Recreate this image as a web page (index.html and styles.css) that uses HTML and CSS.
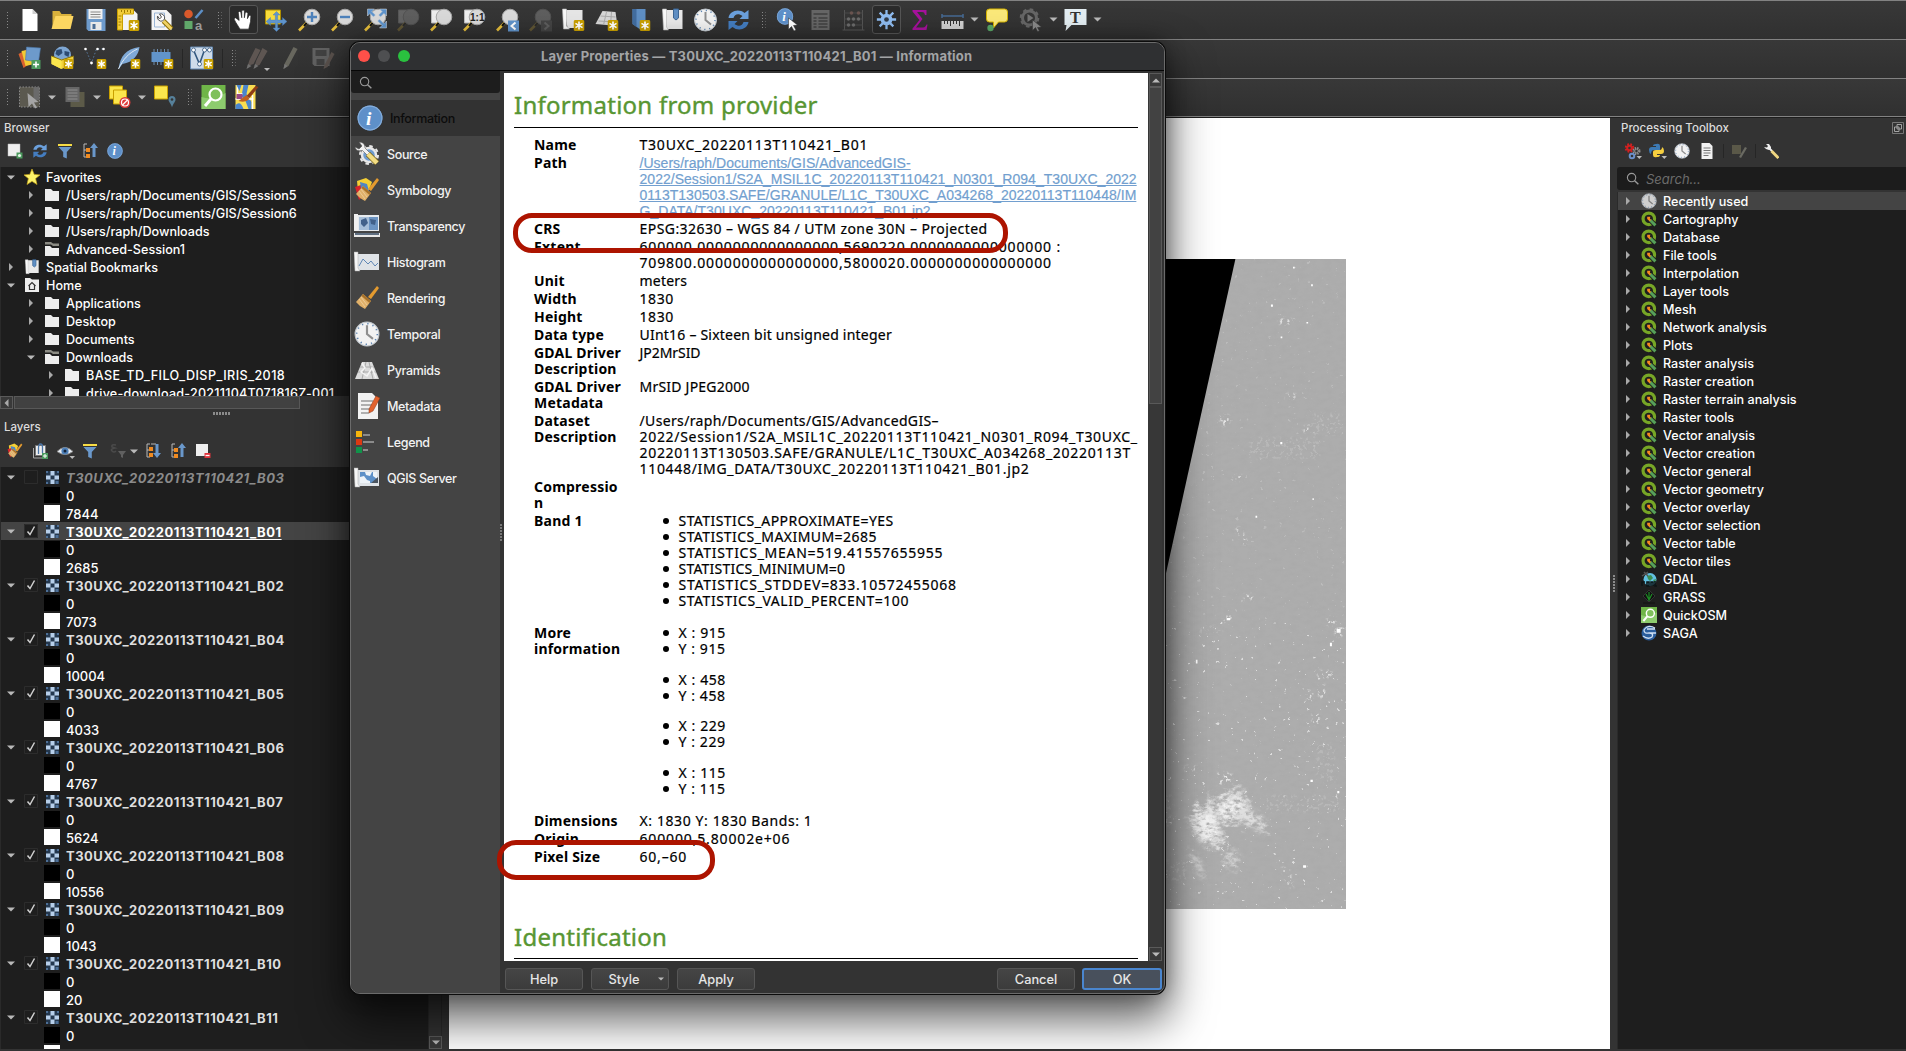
FILE: index.html
```html
<!DOCTYPE html>
<html lang="en">
<head>
<meta charset="utf-8">
<title>QGIS</title>
<link rel="stylesheet" href="styles.css">
</head>
<body>
<svg class="defs" aria-hidden="true">
  <symbol id="star" viewBox="0 0 10 10"><rect width="10" height="10" rx="1.5" fill="#c9a000"/><path d="M5 1.3v7.4M1.8 3.1l6.4 3.8M8.2 3.1L1.8 6.9" stroke="#fff" stroke-width="1.5"/></symbol>
  <symbol id="new" viewBox="0 0 24 24"><path d="M5 1h10l5 5v17H5z" fill="#fff"/><path d="M15 1l5 5h-5z" fill="#cfcfcf"/></symbol>
  <symbol id="open" viewBox="0 0 24 24"><path d="M2 3h7l2 3h10v4H5L2 20z" fill="#d9b13c"/><path d="M5 8h18l-3 13H1z" fill="#fcd661"/></symbol>
  <symbol id="save" viewBox="0 0 24 24"><path d="M3 1h19v22H5l-2-2z" fill="#6d9acb"/><path d="M5 1h14v10H5z" fill="#f1f1f1"/><path d="M7 4h10M7 6.500h10M7 9h10" stroke="#888"/><path d="M7 14h11v8H7z" fill="#e8e8e8"/><path d="M9 16h3v5H9z" fill="#4a6d95"/></symbol>
  <symbol id="layoutnew" viewBox="0 0 24 24"><path d="M3 2h14l4 4v16H3z" fill="#f4f4f4"/><path d="M1 1h16v5H6v16H1z" fill="#f2cd3c" stroke="#c9a000"/><path d="M5 2v2M8 2v3M11 2v2M14 2v3M2 8h3M2 11h2M2 14h3M2 17h2" stroke="#a07c00"/><use href="#star" x="12" y="12" width="11" height="11"/></symbol>
  <symbol id="layoutmgr" viewBox="0 0 24 24"><path d="M2 2h15l5 5v15H2z" fill="#f4f4f4"/><path d="M5 5h10v14H5z" fill="none" stroke="#9bb6d6"/><path d="M8 8a4 4 0 0 0 5 5l2-2a4 4 0 0 0-5-5l2 3-2 2z" fill="#fff" stroke="#555"/><path d="M14 13l8 8" stroke="#8a6b00" stroke-width="5"/><path d="M14 13l8 8" stroke="#f0d264" stroke-width="3"/></symbol>
  <symbol id="style" viewBox="0 0 24 24"><circle cx="6" cy="6" r="4.300" fill="#d9592b"/><path d="M13 10l7-8" stroke="#5d8fc6" stroke-width="2.500"/><path d="M2 13h8v8H2z" fill="#61a86a"/><text x="12.500" y="22" class="sym-a">a</text></symbol>
  <symbol id="hand" viewBox="0 0 24 24"><path d="M8 23l-5-8-2-4 2-1 4 3-1-9 1.500-1.500L9 4l1 6V2l1.500-1L13 2v8l1-6 1.500-.5L17 5l-.500 6 2-4 2 .5-.500 7-2 8.500z" fill="#fff" stroke="#222" stroke-width=".8"/></symbol>
  <symbol id="pan" viewBox="0 0 24 24"><path d="M1 2h15v14H1z" fill="#f8dc3c" stroke="#ad8d00"/><path d="M12 3.500l3.500 3.500h-2.300v5H18v-2.500l4.500 4-4.500 4V15h-4.800v5h2.300L12 23.500 8.500 20h2.300v-5H6v2.500l-4.500-4 4.500-4V12h4.800V7H8.500z" fill="#5f94cc" stroke="#4a78ab" stroke-width=".4"/></symbol>
  <symbol id="mag" viewBox="0 0 24 24"><path d="M1.500 22.500l8-8" stroke="#e5bd3b" stroke-width="2.600"/><path d="M6.500 18l4-4.500" stroke="#111" stroke-width="2"/><circle cx="14.500" cy="9" r="7.800" fill="#d9d9d9" stroke="#a6a6a6"/></symbol>
  <symbol id="zin" viewBox="0 0 24 24"><use href="#mag"/><path d="M14.500 4v10M9.500 9h10" stroke="#4e82bb" stroke-width="2.400"/></symbol>
  <symbol id="zout" viewBox="0 0 24 24"><use href="#mag"/><path d="M9.500 9h10" stroke="#4e82bb" stroke-width="2.400"/></symbol>
  <symbol id="zfull" viewBox="0 0 24 24"><use href="#mag"/><path d="M4 1h7L8.500 3.500 12 7l-2 2-3.500-3.500L4 8zM23 1v7l-2.500-2.500L17 9l-2-2 3.500-3.500L16 1zM23 20h-7l2.500-2.500L14 13l2-2 4.500 4.500L23 13z" fill="#5f94cc" stroke="#ddd" stroke-width=".5"/></symbol>
  <symbol id="zlayer" viewBox="0 0 24 24"><path d="M2 2h13v13H2z" fill="#eee" stroke="#bbb"/><use href="#mag"/></symbol>
  <symbol id="znative" viewBox="0 0 24 24"><use href="#zlayer"/><text x="7.500" y="13" class="sym-11">1:1</text></symbol>
  <symbol id="zprev" viewBox="0 0 24 24"><use href="#mag"/><path d="M12.500 12.500h11v11h-11z" fill="#6093ca"/><path d="M20 14.500L16 18l4 3.500" fill="none" stroke="#fff" stroke-width="2"/></symbol>
  <symbol id="znext" viewBox="0 0 24 24"><use href="#mag"/><path d="M12.500 12.500h11v11h-11z" fill="#777"/><path d="M16 14.500l4 3.500-4 3.500" fill="none" stroke="#ddd" stroke-width="2"/></symbol>
  <symbol id="mapnew" viewBox="0 0 24 24"><path d="M3 2h18v18H6z" fill="#e6e6e6"/><path d="M1 1h4v17l3 3H2z" fill="#fafafa" stroke="#bbb" stroke-width=".6"/><use href="#star" x="12" y="12" width="11" height="11"/></symbol>
  <symbol id="map3d" viewBox="0 0 24 24"><path d="M8 3l13 1 2 14-22-2z" fill="#d6d6d6"/><path d="M6 8l15 1M4 13l18 1M12 4l-3 13M17 4l-1 13" stroke="#aaa"/><use href="#star" x="13" y="12" width="11" height="11"/></symbol>
  <symbol id="bmnew" viewBox="0 0 24 24"><path d="M5 1h13v17l-6 3-7-5z" fill="#5f8fc4"/><path d="M5 1h4v18l-4-3z" fill="#426d9f"/><use href="#star" x="12" y="12" width="11" height="11"/></symbol>
  <symbol id="bm" viewBox="0 0 24 24"><path d="M2 2h20v19H5z" fill="#e9e9e9"/><path d="M2 1h4v18l2 3H3z" fill="#fafafa" stroke="#bbb" stroke-width=".6"/><path d="M13 1h5v9l-2.500 2L13 10z" fill="#5f8fc4" stroke="#3d6694"/></symbol>
  <symbol id="clock" viewBox="0 0 24 24"><circle cx="12" cy="12" r="11" fill="#f2f2f2" stroke="#bfc6cd"/><circle cx="12" cy="12" r="9.500" fill="none" stroke="#5b83b0" stroke-width="1.400" stroke-dasharray="1.200 3.770"/><path d="M12 4v8l5.500 4.500" fill="none" stroke="#8f8f8f" stroke-width="2"/></symbol>
  <symbol id="refresh" viewBox="0 0 24 24"><path d="M2 10C3 3 12 0 18 5l4-3v9h-9l3-3C12 5 8 6 7 10z" fill="#6ba0dc"/><path d="M22 14c-1 7-10 10-16 5l-4 3v-9h9l-3 3c4 3 8 2 9-2z" fill="#447dc0"/></symbol>
  <symbol id="info" viewBox="0 0 24 24"><circle cx="12" cy="12" r="11.500" fill="#5e90c9"/><circle cx="12" cy="12" r="11" fill="none" stroke="#86aedb"/><text x="8.200" y="18.500" class="sym-i">i</text></symbol>
  <symbol id="identify" viewBox="0 0 24 24"><use href="#info" width="17" height="17" x="1"/><path d="M13 10l9 7-4 .5 2.500 4.500-2 1-2.500-4.500-3 3z" fill="#fff" stroke="#222" stroke-width=".5"/></symbol>
  <symbol id="table" viewBox="0 0 24 24"><path d="M3 2h18v20H3z" fill="#666"/><path d="M5 6h14M5 10h3M10 10h9M5 13h3M10 13h9M5 16h3M10 16h9M5 19h3M10 19h9" stroke="#404040" stroke-width="1.500"/></symbol>
  <symbol id="abacus" viewBox="0 0 24 24"><path d="M3 2v20M21 2v20M1 22h22" stroke="#555"/><path d="M3 5h18M3 11h18M3 17h18" stroke="#4a4a4a"/><g fill="#6a5450"><circle cx="10" cy="5" r="1.800"/><circle cx="17" cy="5" r="1.800"/></g><g fill="#6b6b6b"><circle cx="7" cy="11" r="1.700"/><circle cx="12" cy="11" r="1.700"/><circle cx="17" cy="11" r="1.700"/><circle cx="7" cy="17" r="1.700"/><circle cx="12" cy="17" r="1.700"/></g></symbol>
  <symbol id="gear" viewBox="0 0 24 24"><path d="M12 1v22M1 12h22M4.200 4.200l15.600 15.600M19.800 4.200L4.200 19.800" stroke="#8fbcf0" stroke-width="2.600"/><circle cx="12" cy="12" r="6.700" fill="#8fbcf0"/><circle cx="12" cy="12" r="2.700" fill="#303a48"/></symbol>
  <symbol id="sigma" viewBox="0 0 24 24"><path d="M5 2h14v5h-1.500c-.5-2-1-3-3-3H9.500l5.500 7-6.500 8.500h7c2 0 3-1.500 3.500-3H20L19 22H5v-1.500L12 12 5 3.500z" fill="#a6129c"/></symbol>
  <symbol id="ruler" viewBox="0 0 24 24"><path d="M1.500 8h21M1.500 6v4M22.500 6v4" stroke="#456a92" stroke-width="1.500"/><path d="M1 13h22v8H1z" fill="#d0d0d0"/><path d="M4 13v3M7 13v3M10 13v5M13 13v3M16 13v3M19 13v5" stroke="#333"/></symbol>
  <symbol id="tip" viewBox="0 0 24 24"><path d="M5 1h15q3 0 3 3v7q0 3-3 3h-6l-5 6v-6H5q-3 0-3-3V4q0-3 3-3z" fill="#fbe97a" stroke="#d6b400"/><circle cx="6" cy="20" r="3.200" fill="#58a667"/></symbol>
  <symbol id="run" viewBox="0 0 24 24"><circle cx="10" cy="10" r="7" fill="none" stroke="#666" stroke-width="3"/><circle cx="10" cy="10" r="8.800" fill="none" stroke="#666" stroke-width="2" stroke-dasharray="3.500 3.400"/><path d="M8 6l6 4-6 4z" fill="#777"/><path d="M13 12l9 7-4 .5 2 3.500-2 .5-2-4-3 3z" fill="#8a8a8a" stroke="#333" stroke-width=".5"/></symbol>
  <symbol id="annot" viewBox="0 0 24 24"><path d="M1 1h22v16H8l-6 6 1-6H1z" fill="#e3edf2"/><text x="6.500" y="14.500" class="sym-t">T</text></symbol>
  <symbol id="down" viewBox="0 0 8 5"><path d="M0 .5h8L4 4.500z" fill="#b9b9b9"/></symbol>
  <symbol id="right" viewBox="0 0 5 8"><path d="M.5 0L4.500 4 .5 8z" fill="#a9a9a9"/></symbol>
  <symbol id="addlayer" viewBox="0 0 24 24"><path d="M1 8l9-5 5 13-9 6z" fill="#d9622f"/><path d="M4 5l11-2 2 15-9 2z" fill="#f3cb33"/><path d="M9 1l14 1-2 14-13-2z" fill="#6d9acb" stroke="#4a75a8" stroke-width=".6"/><path d="M14 14h9v9h-9z" fill="#4d9b5f"/><path d="M18.500 15.500v6M15.500 18.500h6" stroke="#fff" stroke-width="1.600"/></symbol>
  <symbol id="gpkg" viewBox="0 0 24 24"><circle cx="12" cy="9" r="8.500" fill="#7ea6d2"/><path d="M6 4l5-1 1 4-4 3-3-2zM14 5l5 1-1 5-4-2z" fill="#2c4b73"/><path d="M1 10l10 4 12-4v8l-12 5-10-5z" fill="#f3d23b"/><path d="M11 14v9L1 18v-8z" fill="#fbe64d"/><path d="M1 10l10 4 12-4" fill="none" stroke="#8b7200"/><use href="#star" x="13" y="13" width="10" height="10"/></symbol>
  <symbol id="shp" viewBox="0 0 24 24"><path d="M2 3l6 14L13 3h7" fill="none" stroke="#56779c" stroke-dasharray="1.500 2"/><g fill="#fff"><circle cx="2" cy="3" r="1.300"/><circle cx="8" cy="17" r="1.400"/><circle cx="14" cy="3" r="1.300"/><circle cx="20" cy="3" r="1.300"/></g><use href="#star" x="13" y="13" width="10" height="10"/></symbol>
  <symbol id="feather" viewBox="0 0 24 24"><path d="M2 23C4 10 9 3 23 1c-1 8-6 15-17 17z" fill="#7fa9d6"/><path d="M2 23C6 14 12 7 21 3" fill="none" stroke="#dfeaf5"/><use href="#star" x="14" y="13" width="10" height="10"/></symbol>
  <symbol id="mem" viewBox="0 0 24 24"><path d="M4.500 3v16M8 3v16M11.500 3v16M15 3v16M18.500 3v16" stroke="#6f8fb0"/><path d="M2 6h19v10H2z" fill="#6194ca"/><use href="#star" x="14" y="13" width="10" height="10"/></symbol>
  <symbol id="virt" viewBox="0 0 24 24"><path d="M1 1h22v22H1z" fill="#cfdcea" stroke="#6488b0"/><path d="M4 4l6 14L15 4h5" fill="none" stroke="#33587f" stroke-width="1.600"/><g fill="#fff" stroke="#33587f" stroke-width=".8"><circle cx="4" cy="4" r="2"/><circle cx="10" cy="18" r="2"/><circle cx="15" cy="4" r="2"/><circle cx="20" cy="4" r="2"/></g><use href="#star" x="14" y="13" width="10" height="10"/></symbol>
  <symbol id="pencils" viewBox="0 0 24 24"><path d="M2 20l2-6L10 2l5 2-7 14zM9 20l2-6L17 2l5 3-8 14z" fill="#7a6c66"/><path d="M1 23l1.500-5 3.500 2zM8 23l1.500-5 3.500 2z" fill="#999"/></symbol>
  <symbol id="pencil" viewBox="0 0 24 24"><path d="M6 18L15 1l4 2-9 17-5 3z" fill="#8a897a"/><path d="M5 23l1-5 3 2z" fill="#a1a1a1"/></symbol>
  <symbol id="savee" viewBox="0 0 24 24"><path d="M1 2h17v18H3l-2-2z" fill="#808080"/><path d="M4 4h11v6H4zM5 13h8v6H5z" fill="#4b4b4b"/><path d="M13 19l7-13 3 2-7 13-4 2z" fill="#75675f"/></symbol>
  <symbol id="select" viewBox="0 0 24 24"><path d="M2 2h20v20H2z" fill="#5b594f" stroke="#8a8a8a" stroke-dasharray="1.500 1.500"/><path d="M16 2h6v13h-6z" fill="#6a6a6a"/><path d="M10 8l11 9-4.500.5 3 5-2 1-3-5-3.500 3.500z" fill="#a5a5a5"/></symbol>
  <symbol id="forms" viewBox="0 0 24 24"><path d="M10 7h12v15H8V9z" fill="#5c5a48"/><path d="M3 2h14v15H3z" fill="#666"/><path d="M5 5h10M5 8h10M5 11h10M5 14h10" stroke="#8f8f8f"/></symbol>
  <symbol id="desel" viewBox="0 0 24 24"><path d="M2 1h13v13H2z" fill="#fbe64d" stroke="#c9a000"/><path d="M6 5h13v14H6z" fill="#fbe64d" stroke="#c9a000"/><circle cx="17.500" cy="17.500" r="5.500" fill="#dc3b3b"/><circle cx="17.500" cy="17.500" r="3.500" fill="none" stroke="#fff" stroke-width="1.200"/><path d="M15 20l5-5" stroke="#fff" stroke-width="1.200"/></symbol>
  <symbol id="loc" viewBox="0 0 24 24"><path d="M2 1h13v13H2z" fill="#fbe64d" stroke="#c9a000"/><path d="M19.500 11a3.500 3.500 0 0 1 3.500 3.500c0 2.500-2.500 4-3.500 8-1-4-3.500-5.500-3.500-8a3.500 3.500 0 0 1 3.500-3.500z" fill="#56809a"/><circle cx="19.500" cy="14.500" r="1.300" fill="#333"/></symbol>
  <symbol id="qosm" viewBox="0 0 24 24"><path d="M0 0h24v24H0z" fill="#6fb548"/><path d="M0 12Q12 16 24 8v16H0z" fill="#8dcc6e"/><circle cx="14" cy="9.500" r="6" fill="#7fc05c" stroke="#fff" stroke-width="2.200"/><path d="M9.500 14L3.500 21" stroke="#fff" stroke-width="3"/></symbol>
  <symbol id="osmp" viewBox="0 0 24 24"><path d="M1 0h20v24H1z" fill="#f9dd50"/><path d="M9 0h5l-2 9 5 8v7h-3l-3-8-4-5z" fill="#4a85cc"/><path d="M3 0v9h5M1 14h18M18 10v14" fill="none" stroke="#fff" stroke-width="1.500"/><path d="M2 9h6v5H2z" fill="#9a4a86"/><path d="M1 20q5-5 8 4H1zM2 0h5l-2 6z" fill="#4a85cc"/><path d="M12 11l9-10 3 1-9 11z" fill="#8f3d16"/><path d="M4 16l8-6 3 4q-4 4-11 2z" fill="#c0601f"/></symbol>
  <symbol id="addsel" viewBox="0 0 16 16"><path d="M1 1h12v12H1z" fill="#efefef" stroke="#bbb" stroke-width=".5"/><path d="M9.500 9.500h6v6h-6z" fill="#4d9b5f"/><circle cx="12.500" cy="12.500" r="1.600" fill="#e6f5e8"/></symbol>
  <symbol id="filter" viewBox="0 0 16 16"><path d="M1 1h14v2H1z" fill="#f7dc45"/><path d="M1.500 4h13L9.800 9v6.500L6.200 14V9z" fill="#6a98cb"/></symbol>
  <symbol id="collapse" viewBox="0 0 16 16"><path d="M2 1h3M2 1v13h3M2 7h3" fill="none" stroke="#b9b9b9"/><path d="M4 5h4v4H4zM4 11h4v4H4z" fill="#f08b22"/><path d="M12 0l4 5h-2.500v9h-3V5H8z" fill="#6a98cb"/></symbol>
  <symbol id="expand" viewBox="0 0 16 16"><path d="M2 1h3M2 1v13h3M2 7h3M6 1h5" fill="none" stroke="#b9b9b9"/><path d="M4 4h4v4H4zM4 10h4v4H4z" fill="#f08b22"/><path d="M12 15l4-5h-2.500V1h-3v9H8z" fill="#6a98cb"/></symbol>
  <symbol id="fav" viewBox="0 0 16 16"><path d="M8 0l2.200 5.400L16 5.900l-4.400 3.700L13 15.500 8 12.300 3 15.500l1.400-5.900L0 5.900l5.800-.5z" fill="#fdf36a" stroke="#c9a81c" stroke-width=".7"/></symbol>
  <symbol id="folder" viewBox="0 0 16 16"><path d="M1 2h6l2 2h6v10H1z" fill="#ededed"/></symbol>
  <symbol id="folderl" viewBox="0 0 16 16"><path d="M1 1h6l2 1.500h6V5H9L7 3.500H1z" fill="#8c8c84"/><path d="M1 5h5l2 2h7v8H1z" fill="#ededed"/></symbol>
  <symbol id="home" viewBox="0 0 16 16"><path d="M1 1h5l2 1.500h7V15H1z" fill="#ededed"/><path d="M4.500 9L8 5.500 11.500 9M5.500 8.500v4h5v-4" fill="none" stroke="#333" stroke-width="1.200"/></symbol>
  <symbol id="brush" viewBox="0 0 26 26"><path d="M14 12L23 1l2 2-8 11z" fill="#e39a2f"/><path d="M9 9l8 7-6 8Q5 21 2 17z" fill="#e0b069"/><path d="M9 9l8 7-1.500 2L7.500 11z" fill="#a8722a"/><path d="M7 12l6 8M5 14l6 8" stroke="#f0d1a0" stroke-width=".8"/></symbol>
  <symbol id="symb" viewBox="0 0 26 26"><path d="M3 4l9-3 6 4-3 8-11 1z" fill="#f4cf35"/><path d="M1 10l6-2 5 8-7 7z" fill="#d8232a"/><path d="M6 5l7 2 2 7-8-2z" fill="#4f85c4"/><use href="#brush"/></symbol>
  <symbol id="addgrp" viewBox="0 0 16 16"><path d="M1.500 5v10h9" fill="none" stroke="#aaa"/><path d="M3.500 2.500h10v10h-10z" fill="#eee" stroke="#777"/><path d="M6.500 11V5q0-4 2-4t2 3v6" fill="none" stroke="#4a75a8" stroke-width="1.300"/><path d="M10 10h6v6h-6z" fill="#4d9b5f"/><path d="M13 11v4M11 13h4" stroke="#fff"/></symbol>
  <symbol id="eye" viewBox="0 0 18 16"><path d="M0 8Q8 0 16 8 8 14 0 8z" fill="#e8eef5" stroke="#888"/><circle cx="8" cy="7.500" r="3.600" fill="#4c7fb8"/><circle cx="8" cy="7.500" r="1.500" fill="#12233a"/><path d="M12.500 12.500h5.500L15.200 15.500z" fill="#bbb"/></symbol>
  <symbol id="eps" viewBox="0 0 16 16"><path d="M6 2Q1 1 2 4q3 1 3 1Q0 6 2 8t4 0" fill="none" stroke="#4a4a4a" stroke-width="1.500"/><path d="M8 8h8l-3 4v3l-2-1v-2z" fill="#606060"/></symbol>
  <symbol id="remove" viewBox="0 0 16 16"><path d="M1 1h12v12H1z" fill="#efefef"/><path d="M9.500 10h6v5h-6z" fill="#e0343c"/><path d="M10.500 12.500h4" stroke="#fff" stroke-width="1.300"/></symbol>
  <symbol id="raster" viewBox="0 0 13 13"><path d="M0 0h13v13H0z" fill="#24384f"/><path d="M4.500 0h4v4.500h-4zM0 4.500h4.500v4H0zM8.500 4.500H13v4H8.500zM4.500 8.500h4V13h-4z" fill="#b7cfea"/><path d="M0 0h2v2H0zM11 0h2v2h-2zM0 11h2v2H0zM9.500 10h3v3h-3z" fill="#4d6f96"/></symbol>
  <symbol id="check" viewBox="0 0 14 14"><path d="M.5.5h13v13H.5z" class="check-box"/><path d="M3.500 7.500l2.500 3 4.500-8" fill="none" stroke="#d0d0d0" stroke-width="1.500"/></symbol>
  <symbol id="uncheck" viewBox="0 0 14 14"><path d="M.5.5h13v13H.5z" class="check-box"/></symbol>
  <symbol id="q" viewBox="0 0 15 15"><circle cx="7.300" cy="7.300" r="5.400" fill="none" stroke="#77a626" stroke-width="3"/><path d="M9 9l5 5" stroke="#1e1e1e" stroke-width="4.500"/><path d="M8.500 8.500l5 5" stroke="#56a05a" stroke-width="2.800"/><path d="M5.800 5.500h3l-.5 1.500 1.200 1.500-1.500 1.200-2.200-2.200z" fill="#f58a1f"/></symbol>
  <symbol id="gdal" viewBox="0 0 16 16"><circle cx="9" cy="8.500" r="6.500" fill="#62bfe0"/><path d="M6 5l4-1 2 3-3 3-2-2zM12 9l3-1-1 4z" fill="#3d8f52"/><path d="M1 5l6-4M3 1l4 4" stroke="#555" stroke-width="1.500"/><path d="M1 15v-4h3M6 11v4h2v-4zM10 15v-4h2v4M14 10v5h2" fill="none" stroke="#0c1416" stroke-width="1.600"/></symbol>
  <symbol id="grass" viewBox="0 0 16 16"><path d="M8 1l6 6-6 6-6-6z" fill="#111" stroke="#333"/><path d="M8 12V3M8 11L5 5M8 11l3-6" stroke="#1d8a25" stroke-width="1.200"/><path d="M2 14h12" stroke="#111"/></symbol>
  <symbol id="saga" viewBox="0 0 16 16"><circle cx="8" cy="8" r="7.500" fill="#2a5d9c"/><path d="M14 3Q7-1 3 5q0 4 5 3 5 0 3 4-4 3-9-1M6 4h8M8 8h7" fill="none" stroke="#cfe0f3" stroke-width="1.300"/></symbol>
  <symbol id="gears" viewBox="0 0 18 17"><g fill="none"><circle cx="5.500" cy="5" r="3.500" stroke="#d22020" stroke-width="2.500" stroke-dasharray="1.600 1.200"/><circle cx="5.500" cy="5" r="2.300" stroke="#d22020" stroke-width="2"/><circle cx="12.500" cy="8" r="3" stroke="#8f8f8f" stroke-width="2" stroke-dasharray="1.400 1"/><circle cx="12.500" cy="8" r="1.800" stroke="#8f8f8f"/><circle cx="8" cy="13" r="2.300" stroke="#6b8fc9" stroke-width="2"/></g><path d="M12.500 13h5.500l-2.700 3z" fill="#bbb"/></symbol>
  <symbol id="py" viewBox="0 0 18 17"><path d="M7 1q4-1 4 2v4H5q-3 0-3 4-2-1-2-4 0-3 3-3h4V3H4q0-2 3-2z" fill="#3c7ab5"/><path d="M8 14q-4 1-4-2V9q0-2 3-2h4q2 0 2-3 2 1 2 4 0 3-3 3H8v1h3q0 2-3 2z" fill="#f6cf3f"/><path d="M12.500 13h5.500l-2.700 3z" fill="#bbb"/></symbol>
  <symbol id="doc" viewBox="0 0 16 16"><path d="M2.500 0h8l3 3v13h-11z" fill="#f2f2f2"/><path d="M4.500 5h7M4.500 7.500h7M4.500 10h7M4.500 12.500h5" stroke="#777"/></symbol>
  <symbol id="edits" viewBox="0 0 16 16"><path d="M1 2h9v9H1z" fill="#5a5848"/><path d="M8 14l6-10 2 1-6 10z" fill="#6a6a62"/></symbol>
  <symbol id="wrench" viewBox="0 0 16 16"><path d="M3 1l3 0 2 3 0 2-2 1-3-1-2-2 3 .5 1-1.500z" fill="#eee"/><path d="M6 5l3 3" stroke="#eee" stroke-width="2"/><path d="M8.500 8l7 7" stroke="#efd681" stroke-width="3"/></symbol>
  <symbol id="lens" viewBox="0 0 14 14"><circle cx="6" cy="6" r="4.500" fill="none" stroke="#9a9a9a" stroke-width="1.200"/><path d="M9.300 9.300l4 4" stroke="#9a9a9a" stroke-width="1.500"/></symbol>
  <symbol id="float" viewBox="0 0 12 12"><path d="M.5.500h11v11H.500z" fill="none" stroke="#777"/><path d="M5 2.500h4.500V7H5zM2.500 5H7v4.500H2.500z" fill="none" stroke="#a5a5a5"/></symbol>
  <symbol id="source" viewBox="0 0 26 26"><circle cx="15" cy="14" r="7" fill="#6f9bcd" stroke="#e8e8e8" stroke-width="2.500"/><circle cx="15" cy="14" r="9" fill="none" stroke="#e8e8e8" stroke-width="2" stroke-dasharray="3.500 3.570"/><path d="M5 1q6 0 6 6l5 5-2.500 2.500-5-5Q2 11 1 6l4 2 3-3z" fill="#f2f2f2" stroke="#555" stroke-width=".6"/><path d="M14 13l9 9" stroke="#7a6416" stroke-width="6"/><path d="M14 13l9 9" stroke="#f3dd83" stroke-width="4.500"/></symbol>
  <symbol id="mapsheet" viewBox="0 0 26 24"><path d="M2 4h23v16H4z" fill="#dfe3e7"/><path d="M0 2h4v16l2 3H1z" fill="#f6f6f6" stroke="#aaa" stroke-width=".5"/></symbol>
  <symbol id="transp" viewBox="0 0 26 24"><path d="M2 1h23v16H4z" fill="#e6eaee"/><path d="M5 3h19v13H5z" fill="#6c94c2"/><path d="M5 3h10v13H5z" fill="#a7bfd9"/><path d="M7 6l5-2 2 5-4 4-3-3zM16 5l6 1-1 5-4-1z" fill="#42618a"/><path d="M0 0h4v17H0z" fill="#f0f0f0"/><path d="M0 19h26v4H0z" fill="#e8e8e8"/><path d="M1 20h24" stroke="#31465f" stroke-width="1.500"/></symbol>
  <symbol id="hist" viewBox="0 0 26 24"><use href="#mapsheet"/><path d="M5 16l4-7 5 5 3-3 4 5 3-3" fill="none" stroke="#5f87b5"/></symbol>
  <symbol id="pyr" viewBox="0 0 26 24"><path d="M8 4h10l7 17H1z" fill="#dcdcdc"/><path d="M6 9h14M4 14h18M12 4l-4 17M15 4l4 17" stroke="#aaa"/><path d="M8 5l3 5-4 4 6 4 5-8 4 10" fill="none" stroke="#f4f4f4" stroke-width="1.500"/></symbol>
  <symbol id="meta" viewBox="0 0 26 26"><path d="M4 0h14l6 6v20H4z" fill="#f2f2f2"/><path d="M7 8h12M7 12h12M7 16h10M7 20h8" stroke="#999" stroke-width="1.300"/><path d="M15 16l7-13 4 2-7 13-4 2z" fill="#e2622e" stroke="#8a3512" stroke-width=".5"/></symbol>
  <symbol id="legend" viewBox="0 0 26 26"><path d="M2 2h6v6H2z" fill="#f6b50c"/><path d="M2 10h6v6H2z" fill="#dc3912"/><path d="M2 18h6v6H2z" fill="#10934a"/><path d="M9 6h7M9 13h11M9 21h5" stroke="#8b8b8b" stroke-width="2"/></symbol>
  <symbol id="server" viewBox="0 0 26 24"><use href="#mapsheet"/><path d="M6 6h17v11H6z" fill="#5d90c8"/><path d="M6 11l4-1 3 4 3 1v2H6zM11 6h7l-2 4-4-1zM19 6h4v7l-4-3z" fill="#eef3f8"/><path d="M17 17l7-6v6z" fill="#4b5560"/></symbol>
</svg>

<header class="toolbars">
  <div class="bar bar-1">
    <i class="grip first"></i>
    <svg class="ic"><use href="#new"/></svg><svg class="ic"><use href="#open"/></svg><svg class="ic"><use href="#save"/></svg><svg class="ic"><use href="#layoutnew"/></svg><svg class="ic"><use href="#layoutmgr"/></svg><svg class="ic"><use href="#style"/></svg>
    <i class="grip"></i>
    <span class="pressed"><svg class="ic"><use href="#hand"/></svg></span><svg class="ic"><use href="#pan"/></svg><svg class="ic"><use href="#zin"/></svg><svg class="ic"><use href="#zout"/></svg><svg class="ic"><use href="#zfull"/></svg><svg class="ic dim"><use href="#zlayer"/></svg><svg class="ic"><use href="#zlayer"/></svg><svg class="ic"><use href="#znative"/></svg><svg class="ic"><use href="#zprev"/></svg><svg class="ic dim"><use href="#znext"/></svg><svg class="ic"><use href="#mapnew"/></svg><svg class="ic"><use href="#map3d"/></svg><svg class="ic"><use href="#bmnew"/></svg><svg class="ic"><use href="#bm"/></svg><svg class="ic"><use href="#clock"/></svg><svg class="ic"><use href="#refresh"/></svg>
    <i class="grip"></i>
    <svg class="ic"><use href="#identify"/></svg><svg class="ic"><use href="#table"/></svg><svg class="ic"><use href="#abacus"/></svg><span class="pressed"><svg class="ic"><use href="#gear"/></svg></span><svg class="ic"><use href="#sigma"/></svg><svg class="ic"><use href="#ruler"/></svg><svg class="dd"><use href="#down"/></svg><svg class="ic"><use href="#tip"/></svg><svg class="ic gap"><use href="#run"/></svg><svg class="dd"><use href="#down"/></svg><svg class="ic"><use href="#annot"/></svg><svg class="dd"><use href="#down"/></svg>
  </div>
  <div class="bar bar-2">
    <i class="grip first"></i>
    <svg class="ic"><use href="#addlayer"/></svg><svg class="ic"><use href="#gpkg"/></svg><svg class="ic"><use href="#shp"/></svg><svg class="ic"><use href="#feather"/></svg><svg class="ic"><use href="#mem"/></svg>
    <i class="vsep"></i><svg class="ic"><use href="#virt"/></svg><i class="vsep"></i>
    <i class="grip"></i>
    <span class="with-dd"><svg class="ic dim2"><use href="#pencils"/></svg><svg class="dd-in"><use href="#down"/></svg></span><svg class="ic dim2"><use href="#pencil"/></svg><svg class="ic dim2"><use href="#savee"/></svg>
  </div>
  <div class="bar bar-3">
    <i class="grip first"></i>
    <svg class="ic"><use href="#select"/></svg><svg class="dd wide"><use href="#down"/></svg><svg class="ic"><use href="#forms"/></svg><svg class="dd wide"><use href="#down"/></svg><svg class="ic"><use href="#desel"/></svg><svg class="dd wide"><use href="#down"/></svg><svg class="ic"><use href="#loc"/></svg>
    <i class="grip"></i>
    <svg class="ic"><use href="#qosm"/></svg><svg class="ic"><use href="#osmp"/></svg>
  </div>
</header>

<main class="work">
  <aside class="left">
    <div class="panel-title">Browser</div>
    <div class="mini"><svg><use href="#addsel"/></svg><svg><use href="#refresh"/></svg><svg><use href="#filter"/></svg><svg><use href="#collapse"/></svg><svg><use href="#info"/></svg></div>
    <div class="tree browser">
      <div class="row"><svg class="tw"><use href="#down"/></svg><svg class="ti"><use href="#fav"/></svg>Favorites</div>
      <div class="row l1"><svg class="tw r"><use href="#right"/></svg><svg class="ti"><use href="#folder"/></svg>/Users/raph/Documents/GIS/Session5</div>
      <div class="row l1"><svg class="tw r"><use href="#right"/></svg><svg class="ti"><use href="#folder"/></svg>/Users/raph/Documents/GIS/Session6</div>
      <div class="row l1"><svg class="tw r"><use href="#right"/></svg><svg class="ti"><use href="#folder"/></svg>/Users/raph/Downloads</div>
      <div class="row l1"><svg class="tw r"><use href="#right"/></svg><svg class="ti"><use href="#folderl"/></svg>Advanced-Session1</div>
      <div class="row"><svg class="tw r"><use href="#right"/></svg><svg class="ti"><use href="#bm"/></svg>Spatial Bookmarks</div>
      <div class="row"><svg class="tw"><use href="#down"/></svg><svg class="ti"><use href="#home"/></svg>Home</div>
      <div class="row l1"><svg class="tw r"><use href="#right"/></svg><svg class="ti"><use href="#folder"/></svg>Applications</div>
      <div class="row l1"><svg class="tw r"><use href="#right"/></svg><svg class="ti"><use href="#folder"/></svg>Desktop</div>
      <div class="row l1"><svg class="tw r"><use href="#right"/></svg><svg class="ti"><use href="#folder"/></svg>Documents</div>
      <div class="row l1"><svg class="tw"><use href="#down"/></svg><svg class="ti"><use href="#folderl"/></svg>Downloads</div>
      <div class="row l2 caps"><svg class="tw r"><use href="#right"/></svg><svg class="ti"><use href="#folder"/></svg>BASE_TD_FILO_DISP_IRIS_2018</div>
      <div class="row l2 digits"><svg class="tw r"><use href="#right"/></svg><svg class="ti"><use href="#folder"/></svg>drive-download-20211104T071816Z-001</div>
    </div>
    <div class="hscroll"><span class="sbtn"><svg class="flip"><use href="#right"/></svg></span><span class="thumb"></span></div>
    <div class="hsplit"><i></i></div>
    <div class="panel-title tall">Layers</div>
    <div class="mini"><svg><use href="#symb"/></svg><svg><use href="#addgrp"/></svg><svg class="w18"><use href="#eye"/></svg><svg><use href="#filter"/></svg><svg class="mini-eps"><use href="#eps"/></svg><svg class="mini-dd"><use href="#down"/></svg><svg><use href="#expand"/></svg><svg><use href="#collapse"/></svg><svg><use href="#remove"/></svg></div>
    <div class="layers-wrap">
    <div class="tree layers">
      <div class="row off"><svg class="tw"><use href="#down"/></svg><svg class="ck"><use href="#uncheck"/></svg><svg class="ri"><use href="#raster"/></svg>T30UXC_20220113T110421_B03</div>
      <div class="leg"><b class="k"></b>0</div><div class="leg"><b class="w"></b>7844</div>
      <div class="row sel"><svg class="tw"><use href="#down"/></svg><svg class="ck"><use href="#check"/></svg><svg class="ri"><use href="#raster"/></svg><u>T30UXC_20220113T110421_B01</u></div>
      <div class="leg"><b class="k"></b>0</div><div class="leg"><b class="w"></b>2685</div>
      <div class="row"><svg class="tw"><use href="#down"/></svg><svg class="ck"><use href="#check"/></svg><svg class="ri"><use href="#raster"/></svg>T30UXC_20220113T110421_B02</div>
      <div class="leg"><b class="k"></b>0</div><div class="leg"><b class="w"></b>7073</div>
      <div class="row"><svg class="tw"><use href="#down"/></svg><svg class="ck"><use href="#check"/></svg><svg class="ri"><use href="#raster"/></svg>T30UXC_20220113T110421_B04</div>
      <div class="leg"><b class="k"></b>0</div><div class="leg"><b class="w"></b>10004</div>
      <div class="row"><svg class="tw"><use href="#down"/></svg><svg class="ck"><use href="#check"/></svg><svg class="ri"><use href="#raster"/></svg>T30UXC_20220113T110421_B05</div>
      <div class="leg"><b class="k"></b>0</div><div class="leg"><b class="w"></b>4033</div>
      <div class="row"><svg class="tw"><use href="#down"/></svg><svg class="ck"><use href="#check"/></svg><svg class="ri"><use href="#raster"/></svg>T30UXC_20220113T110421_B06</div>
      <div class="leg"><b class="k"></b>0</div><div class="leg"><b class="w"></b>4767</div>
      <div class="row"><svg class="tw"><use href="#down"/></svg><svg class="ck"><use href="#check"/></svg><svg class="ri"><use href="#raster"/></svg>T30UXC_20220113T110421_B07</div>
      <div class="leg"><b class="k"></b>0</div><div class="leg"><b class="w"></b>5624</div>
      <div class="row"><svg class="tw"><use href="#down"/></svg><svg class="ck"><use href="#check"/></svg><svg class="ri"><use href="#raster"/></svg>T30UXC_20220113T110421_B08</div>
      <div class="leg"><b class="k"></b>0</div><div class="leg"><b class="w"></b>10556</div>
      <div class="row"><svg class="tw"><use href="#down"/></svg><svg class="ck"><use href="#check"/></svg><svg class="ri"><use href="#raster"/></svg>T30UXC_20220113T110421_B09</div>
      <div class="leg"><b class="k"></b>0</div><div class="leg"><b class="w"></b>1043</div>
      <div class="row"><svg class="tw"><use href="#down"/></svg><svg class="ck"><use href="#check"/></svg><svg class="ri"><use href="#raster"/></svg>T30UXC_20220113T110421_B10</div>
      <div class="leg"><b class="k"></b>0</div><div class="leg"><b class="w"></b>20</div>
      <div class="row"><svg class="tw"><use href="#down"/></svg><svg class="ck"><use href="#check"/></svg><svg class="ri"><use href="#raster"/></svg>T30UXC_20220113T110421_B11</div>
      <div class="leg"><b class="k"></b>0</div><div class="leg"><b class="w"></b>4186</div>
    </div>
    <div class="vscroll"><span class="sbtn"><svg class="dn"><use href="#down"/></svg></span></div>
    </div>
  </aside>

  <section class="canvas">
    <svg class="raster" viewBox="78 44 540 1499" preserveAspectRatio="none">
      <defs>
        <filter id="grain" x="0" y="0" width="1" height="1"><feTurbulence type="fractalNoise" baseFrequency=".04 .09" numOctaves="4" seed="4"/><feColorMatrix values="0 0 0 0 .35  0 0 0 0 .35  0 0 0 0 .35  1.600 0 0 0 -.6"/></filter>
        <filter id="specks" x="0" y="0" width="1" height="1"><feTurbulence type="fractalNoise" baseFrequency=".07 .1" numOctaves="3" seed="23"/><feColorMatrix values="0 0 0 0 .9  0 0 0 0 .9  0 0 0 0 .9  14 0 0 0 -10.500"/></filter>
        <filter id="glow" x="-.2" y="-.2" width="1.400" height="1.400"><feTurbulence type="fractalNoise" baseFrequency=".05 .11" numOctaves="4" seed="3" result="n"/><feColorMatrix in="n" values="0 0 0 0 1  0 0 0 0 1  0 0 0 0 1  3 0 0 0 -.7" result="m"/><feGaussianBlur in="SourceGraphic" stdDeviation="7"/><feDisplacementMap in2="n" scale="50" result="d"/><feComposite in="d" in2="m" operator="in"/></filter>
        <filter id="cluster" x="-.2" y="-.2" width="1.400" height="1.400"><feTurbulence type="fractalNoise" baseFrequency=".1 .14" numOctaves="2" seed="9" result="n"/><feColorMatrix in="n" values="0 0 0 0 1  0 0 0 0 1  0 0 0 0 1  8 0 0 0 -4.400" result="m"/><feGaussianBlur in="SourceGraphic" stdDeviation="4" result="b"/><feComposite in="b" in2="m" operator="in"/></filter>
      </defs>
      <rect x="78" y="44" width="540" height="1499" fill="#adadad"/>
      <rect x="78" y="44" width="540" height="1499" filter="url(#grain)" opacity=".25"/>
      <rect x="78" y="880" width="540" height="663" filter="url(#specks)" opacity=".7"/>
      <rect x="78" y="44" width="540" height="836" filter="url(#specks)" opacity=".22"/>
      <path d="M148 1335l40-35 60-15 40-20 30 5 10 40 50 30-5 25-40-15-50-10-40 10 15 30-20 25-40-10-30-20z" fill="#dedede" filter="url(#glow)"/>
      <path d="M255 1430l25-25 20 15-15 22-25 6zM150 1410l30 15 20 50-25-15z" fill="#d2d2d2" filter="url(#glow)"/>
      <path d="M170 1330l50-12 10 50-40 20zM240 1310l60-20 10 18-60 24z" fill="#f4f4f4" filter="url(#glow)"/>
      <g fill="#e6e6e6" filter="url(#cluster)"><path d="M244 404h24v22h-24zM284 543h24v12h-24zM288 664l14 0 24 36-14 2zM316 818h26v12h-26zM256 868h22v14h-22zM438 356h30v10h-30zM492 430h16v14h-16zM562 870h24v18h-24zM586 893h28v20h-28zM534 994h40v14h-40zM538 1026h16v30h-16zM502 1040h16v24h-16zM518 1092h20v24h-20zM234 1230h42v24h-42zM138 1214h34v10h-34zM426 1446l24 8 10 46-18-18zM82 1332h24v16h-24zM418 182h36v12h-36z"/></g>
      <g fill="#c9c9c9" opacity=".4" filter="url(#cluster)"><path d="M330 455h210v50h-210zM515 400h90v50h-90zM180 890h70v18h-70zM80 1280h24v40h-24zM530 1160h55v90h-55zM80 1430h60v50h-60zM380 1280h220v40h-220z"/></g>
      <path d="M460 62h5v4h-5zM514 102h5v5h-5zM394 149h6v5h-6zM500 189h5v4h-5zM423 223h5v4h-5zM422 466h6v5h-6zM590 897h12v9h-12zM512 1245h7v5h-7zM592 1271h6v5h-6zM262 872h10v5h-10zM570 929h6v8h-6zM490 1442h9v6h-9zM348 636h5v5h-5zM518 596h4v4h-4zM170 968h5v9h-5z" fill="#fff"/>
      <path d="M78 44h210L80 772h-2z" fill="#000"/>
    </svg>
  </section>
  <div class="vsplit"><i></i></div>

  <aside class="toolbox">
    <div class="panel-title">Processing Toolbox<svg class="float"><use href="#float"/></svg></div>
    <div class="mini"><svg class="w18"><use href="#gears"/></svg><svg class="w18"><use href="#py"/></svg><svg><use href="#clock"/></svg><svg><use href="#doc"/></svg><i class="msep"></i><svg><use href="#edits"/></svg><i class="msep"></i><svg><use href="#wrench"/></svg></div>
    <div class="search"><svg><use href="#lens"/></svg><em>Search...</em></div>
    <div class="tree tools">
      <div class="row sel"><svg class="tw r"><use href="#right"/></svg><svg class="ti pale"><use href="#clock"/></svg>Recently used</div>
      <div class="row"><svg class="tw r"><use href="#right"/></svg><svg class="ti"><use href="#q"/></svg>Cartography</div>
      <div class="row"><svg class="tw r"><use href="#right"/></svg><svg class="ti"><use href="#q"/></svg>Database</div>
      <div class="row"><svg class="tw r"><use href="#right"/></svg><svg class="ti"><use href="#q"/></svg>File tools</div>
      <div class="row"><svg class="tw r"><use href="#right"/></svg><svg class="ti"><use href="#q"/></svg>Interpolation</div>
      <div class="row"><svg class="tw r"><use href="#right"/></svg><svg class="ti"><use href="#q"/></svg>Layer tools</div>
      <div class="row"><svg class="tw r"><use href="#right"/></svg><svg class="ti"><use href="#q"/></svg>Mesh</div>
      <div class="row"><svg class="tw r"><use href="#right"/></svg><svg class="ti"><use href="#q"/></svg>Network analysis</div>
      <div class="row"><svg class="tw r"><use href="#right"/></svg><svg class="ti"><use href="#q"/></svg>Plots</div>
      <div class="row"><svg class="tw r"><use href="#right"/></svg><svg class="ti"><use href="#q"/></svg>Raster analysis</div>
      <div class="row"><svg class="tw r"><use href="#right"/></svg><svg class="ti"><use href="#q"/></svg>Raster creation</div>
      <div class="row"><svg class="tw r"><use href="#right"/></svg><svg class="ti"><use href="#q"/></svg>Raster terrain analysis</div>
      <div class="row"><svg class="tw r"><use href="#right"/></svg><svg class="ti"><use href="#q"/></svg>Raster tools</div>
      <div class="row"><svg class="tw r"><use href="#right"/></svg><svg class="ti"><use href="#q"/></svg>Vector analysis</div>
      <div class="row"><svg class="tw r"><use href="#right"/></svg><svg class="ti"><use href="#q"/></svg>Vector creation</div>
      <div class="row"><svg class="tw r"><use href="#right"/></svg><svg class="ti"><use href="#q"/></svg>Vector general</div>
      <div class="row"><svg class="tw r"><use href="#right"/></svg><svg class="ti"><use href="#q"/></svg>Vector geometry</div>
      <div class="row"><svg class="tw r"><use href="#right"/></svg><svg class="ti"><use href="#q"/></svg>Vector overlay</div>
      <div class="row"><svg class="tw r"><use href="#right"/></svg><svg class="ti"><use href="#q"/></svg>Vector selection</div>
      <div class="row"><svg class="tw r"><use href="#right"/></svg><svg class="ti"><use href="#q"/></svg>Vector table</div>
      <div class="row"><svg class="tw r"><use href="#right"/></svg><svg class="ti"><use href="#q"/></svg>Vector tiles</div>
      <div class="row"><svg class="tw r"><use href="#right"/></svg><svg class="ti"><use href="#gdal"/></svg>GDAL</div>
      <div class="row"><svg class="tw r"><use href="#right"/></svg><svg class="ti"><use href="#grass"/></svg>GRASS</div>
      <div class="row"><svg class="tw r"><use href="#right"/></svg><svg class="ti"><use href="#qosm"/></svg>QuickOSM</div>
      <div class="row"><svg class="tw r"><use href="#right"/></svg><svg class="ti"><use href="#saga"/></svg>SAGA</div>
    </div>
  </aside>
</main>

<div class="dialog">
  <div class="titlebar"><span class="lights"><i class="red"></i><i class="grey"></i><i class="green"></i></span><span class="caption">Layer Properties — T30UXC_20220113T110421_B01 — Information</span></div>
  <div class="dbody">
    <nav class="side">
      <div class="side-search"><svg><use href="#lens"/></svg></div>
      <div class="tabs">
        <div class="tab on"><svg><use href="#info"/></svg>Information</div>
        <div class="tab"><svg><use href="#source"/></svg>Source</div>
        <div class="tab"><svg><use href="#symb"/></svg>Symbology</div>
        <div class="tab"><svg><use href="#transp"/></svg>Transparency</div>
        <div class="tab"><svg><use href="#hist"/></svg>Histogram</div>
        <div class="tab"><svg><use href="#brush"/></svg>Rendering</div>
        <div class="tab"><svg><use href="#clock"/></svg>Temporal</div>
        <div class="tab"><svg><use href="#pyr"/></svg>Pyramids</div>
        <div class="tab"><svg><use href="#meta"/></svg>Metadata</div>
        <div class="tab"><svg><use href="#legend"/></svg>Legend</div>
        <div class="tab"><svg><use href="#server"/></svg>QGIS Server</div>
      </div>
    </nav>
    <div class="dsplit"><i></i></div>
    <div class="right-col">
      <div class="view">
        <article class="doc">
          <h1>Information from provider</h1>
          <dl>
            <dt>Name</dt><dd class="s6">T30UXC_20220113T110421_B01</dd>
            <dt>Path</dt><dd class="link">/Users/raph/Documents/GIS/AdvancedGIS-<br>2022/Session1/S2A_MSIL1C_20220113T110421_N0301_R094_T30UXC_2022<br>0113T130503.SAFE/GRANULE/L1C_T30UXC_A034268_20220113T110448/IM<br>G_DATA/T30UXC_20220113T110421_B01.jp2</dd>
            <dt>CRS</dt><dd class="s2">EPSG:32630 – WGS 84 / UTM zone 30N – Projected</dd>
            <dt>Extent</dt><dd class="s7">600000.0000000000000000,5690220.0000000000000000 :<br>709800.0000000000000000,5800020.0000000000000000</dd>
            <dt>Unit</dt><dd>meters</dd>
            <dt>Width</dt><dd class="s4">1830</dd>
            <dt>Height</dt><dd class="s4">1830</dd>
            <dt>Data type</dt><dd>UInt16 – Sixteen bit unsigned integer</dd>
            <dt>GDAL Driver<br>Description</dt><dd class="s0">JP2MrSID</dd>
            <dt>GDAL Driver<br>Metadata</dt><dd>MrSID JPEG2000</dd>
            <dt>Dataset<br>Description</dt><dd class="s5"><span class="s1">/Users/raph/Documents/GIS/AdvancedGIS–</span><br>2022/Session1/S2A_MSIL1C_20220113T110421_N0301_R094_T30UXC_<br>20220113T130503.SAFE/GRANULE/L1C_T30UXC_A034268_20220113T<br>110448/IMG_DATA/T30UXC_20220113T110421_B01.jp2</dd>
            <dt>Compressio<br>n</dt><dd></dd>
            <dt>Band 1</dt><dd><ul class="stats"><li class="s2">STATISTICS_APPROXIMATE=YES</li><li class="s2">STATISTICS_MAXIMUM=2685</li><li class="s5">STATISTICS_MEAN=519.41557655955</li><li>STATISTICS_MINIMUM=0</li><li class="s5">STATISTICS_STDDEV=833.10572455068</li><li class="s3">STATISTICS_VALID_PERCENT=100</li></ul></dd>
            <dt>More<br>information</dt><dd class="s4"><ul><li>X : 915</li><li>Y : 915</li></ul><ul><li>X : 458</li><li>Y : 458</li></ul><ul><li>X : 229</li><li>Y : 229</li></ul><ul><li>X : 115</li><li>Y : 115</li></ul></dd>
            <dt>Dimensions</dt><dd class="s4">X: 1830 Y: 1830 Bands: 1</dd>
            <dt>Origin</dt><dd class="s7">600000,5.80002e+06</dd>
            <dt>Pixel Size</dt><dd class="s6">60,–60</dd>
          </dl>
          <h1 class="second">Identification</h1>
        </article>
        <div class="dscroll"><span class="sbtn"><svg class="up"><use href="#down"/></svg></span><span class="vthumb"></span><span class="sbtn end"><svg class="dn"><use href="#down"/></svg></span></div>
      </div>
      <div class="buttons"><button>Help</button><button class="menu">Style<svg><use href="#down"/></svg></button><button>Apply</button><button class="push">Cancel</button><button class="ok">OK</button></div>
    </div>
  </div>
  <i class="mark crs"></i>
  <i class="mark pixel"></i>
</div>
</body>
</html>
```
FILE: styles.css
```css
* { box-sizing: border-box; }
body {
  margin: 0; width: 1906px; height: 1051px; overflow: hidden; position: relative;
  display: flex; flex-direction: column;
  background: #333; color: #fff;
  font: 500 13px/18px Inter, "Liberation Sans", sans-serif;
}
.defs { display: none; }
.sym-a { font: 700 13px "Liberation Sans", sans-serif; fill: #9a9a9a; }
.sym-11 { font: 700 10px "Liberation Sans", sans-serif; fill: #222; }
.sym-i { font: italic 700 18px "Liberation Serif", serif; fill: #fff; }
.sym-t { font: 700 16px "Liberation Serif", serif; fill: #333; }
.check-box { fill: none; stroke: #2c2c2c; }

/* toolbars */
.bar { display: flex; align-items: center; background: linear-gradient(#383838, #303030); border-bottom: 1px solid #828282; }
.bar-1 { height: 40px; border-top: 1px solid #828282; padding-bottom: 1px; }
.bar-2 { height: 39px; padding-bottom: 2px; }
.bar-3 { height: 38px; padding-bottom: 1px; }
.ic { width: 33px; height: 24px; flex: none; }
.ic.gap { margin-left: 2px; }
.ic.dim { opacity: .25; }
.ic.dim2 { opacity: .6; }
.grip { width: 16px; height: 18px; flex: none; background: radial-gradient(circle, #8a8a8a 0 .8px, transparent 1px) 6px 0 / 3px 3px repeat; clip-path: inset(0 5px 0 6px); }
.grip.first { width: 12.500px; clip-path: inset(0 3px 0 5px); }
.dd { width: 11px; height: 5px; flex: none; }
.dd.wide { width: 12px; }
.vsep { width: 7px; height: 19px; flex: none; background: linear-gradient(90deg, transparent 4px, #262626 4px 5px, transparent 5px); }
.pressed { width: 33px; display: flex; justify-content: center; }
.pressed .ic { width: 29px; height: 29px; padding: 3px; border: 1px solid #555; border-radius: 3px; background: #2b2b2b; }
.with-dd { position: relative; display: flex; }
.dd-in { position: absolute; left: 23px; top: 21px; width: 6px; height: 5px; }

/* docks */
.work { display: flex; height: 932px; border-top: 1px solid #1d1d1d; }
.left { width: 449px; display: flex; flex-direction: column; }
.panel-title { height: 20px; padding: 0 4px; font-size: 11.500px; line-height: 19px; color: #dcdcdc; display: flex; align-items: center; }
.panel-title.tall { height: 21px; }
.mini { height: 29px; padding: 0 0 3px 7px; display: flex; align-items: center; gap: 9px; }
.mini svg { width: 16px; height: 16px; flex: none; }
.mini svg.w18 { width: 18px; margin-right: -2px; height: 17px; }
.mini svg.mini-eps { margin-left: 3px; }
.mini svg.mini-dd { width: 8px; height: 5px; margin: 0 -2px 0 -5px; }
.tree { background: #1e1e1e; border-left: 1px solid #2a2a2a; padding-top: 1px; overflow: hidden; font-size: 12.600px; }
.row { height: 18px; display: flex; align-items: center; padding: 2px 0 0 3px; white-space: nowrap; }
.row > svg, .leg > b { margin-top: -2px; }
.row.l1 { padding-left: 23px; }
.row.l2 { padding-left: 43px; }
.row.caps { letter-spacing: .45px; }
.row.digits { letter-spacing: .22px; }
.tw { width: 14px; height: 5px; flex: none; }
.tw.r { height: 8px; }
.ti { width: 16px; height: 16px; margin: 0 6px; flex: none; }
.browser { height: 229px; }
.hscroll { height: 14px; display: flex; gap: 1px; background: #333; }
.sbtn { width: 13px; height: 13px; flex: none; display: flex; align-items: center; justify-content: center; background: #393939; border: 1px solid #5a5a5a; }
.sbtn svg { width: 5px; height: 8px; }
.sbtn svg.dn, .sbtn svg.up { width: 8px; height: 5px; }
.flip, .up { transform: rotate(180deg); }
.thumb { width: 286px; height: 13px; background: #414141; border: 1px solid #585858; }
.hsplit { height: 7px; padding-left: 213px; display: flex; align-items: center; }
.hsplit i { width: 18px; height: 3px; background: repeating-linear-gradient(90deg, #8b8b8b 0 2px, transparent 2px 3px); }
.layers-wrap { flex: 1; min-height: 0; display: flex; }
.layers { width: 428px; font-size: 13px; }
.layers .row { font-weight: 700; color: #dedede; letter-spacing: .51px; }
.layers .row.off { font-style: italic; color: #8b8b8b; }
.layers .row.sel { color: #fff; }
.sel { background: #444; }
.ck { width: 14px; height: 14px; margin-left: 6px; flex: none; }
.sel .ck { background: #1e1e1e; }
.ri { width: 13px; height: 13px; margin: 0 7px 0 8px; flex: none; }
.layers u { text-underline-offset: 2px; }
.leg { height: 18px; display: flex; align-items: center; gap: 6px; padding: 2px 0 0 43px; }
.leg b { width: 16px; height: 16px; }
.leg .k { background: #000; }
.leg .w { background: #fff; }
.vscroll { width: 14px; display: flex; align-items: flex-end; background: #333; border: 1px solid #2a2a2a; border-width: 0 1px; }
.canvas { width: 1161px; background: #fff; padding: 141px 0 0 716px; overflow: hidden; }
.raster { width: 181px; height: 650px; display: block; }
.vsplit { width: 7px; display: flex; align-items: center; justify-content: center; }
.vsplit i { width: 2px; height: 17px; background: repeating-linear-gradient(#8b8b8b 0 2px, transparent 2px 3px); }
.toolbox { flex: 1; display: flex; flex-direction: column; }
.toolbox .float { width: 12px; height: 12px; margin-left: auto; margin-right: -2px; }
.msep { width: 1px; height: 14px; margin: 0 -1.500px; background: #262626; }
.search { height: 23px; display: flex; align-items: center; gap: 7px; padding-left: 9px; background: #1c1c1c; border-radius: 3px 0 0 3px; margin-bottom: 2px; }
.search svg { width: 13px; height: 13px; }
.search em { color: #6c6c6c; font-weight: 400; }
.tools { flex: 1; padding-top: 0; }
.pale { opacity: .8; }

/* properties window */
.dialog {
  position: absolute; left: 350px; top: 42px; width: 815px; height: 952px;
  display: flex; flex-direction: column; border-radius: 10px; border: 1px solid #6b6b6b; background: #333;
  box-shadow: 0 0 0 1px #0c0c0c, 0 22px 44px 4px rgba(0,0,0,.62), 0 0 20px rgba(0,0,0,.35);
}
.titlebar { height: 28px; flex: none; display: flex; align-items: center; padding-bottom: 2px; background: #2f3032; border-bottom: 1px solid #060606; border-radius: 9px 9px 0 0; }
.lights { display: flex; gap: 8px; padding-left: 7px; width: 190px; }
.lights i { width: 12px; height: 12px; border-radius: 50%; }
.red { background: #fe5049; }
.grey { background: #4e4f51; }
.green { background: #2ac13f; }
.caption { font-weight: 700; font-size: 13px; letter-spacing: .21px; color: #a3a4a6; white-space: nowrap; }
.dbody { flex: 1; min-height: 0; display: flex; }
.side { width: 149px; background: #444; border-radius: 0 0 0 9px; }
.side-search { height: 22px; background: #1d1d1d; padding: 5px 0 0 8px; border-radius: 0 0 3px 3px; }
.side-search svg { width: 13px; height: 13px; display: block; }
.tabs { margin-top: 7px; }
.tab { height: 36px; display: flex; align-items: center; gap: 7px; padding: 2px 0 0 3px; color: #f2f2f2; font-size: 12.500px; letter-spacing: -.34px; }
.tab svg { width: 26px; height: 26px; margin-top: -2px; flex: none; }
.tab.on { background: #323232; color: #0c0c0c; padding-left: 6px; }
.dsplit { width: 4px; background: #333; display: flex; align-items: center; }
.dsplit i { width: 2px; height: 17px; background: repeating-linear-gradient(#777 0 2px, transparent 2px 3px); }
.right-col { flex: 1; min-width: 0; display: flex; flex-direction: column; }
.view { height: 888px; display: flex; margin-top: 2px; }
.doc { width: 644px; background: #fff; color: #000; padding: 0 10px 0 10px; font: 14px/16px "Noto Sans", "Open Sans", sans-serif; letter-spacing: .22px; white-space: nowrap; overflow: hidden; -webkit-text-stroke: .2px; }
.doc h1 { margin: 0; padding: 18px 0 8px; border-bottom: 1px solid #000; font: 24px/28px "Noto Sans", sans-serif; letter-spacing: .24px; color: #589632; -webkit-text-stroke: .4px; }
.doc h1.second { padding: 58px 0 7px; }
.doc dl { margin: 9px 0 0 20px; display: grid; grid-template-columns: 105.500px 1fr; row-gap: 2px; }
.doc dt { font-weight: 700; -webkit-text-stroke: 0; }
.doc dd { margin: 0; }
.doc .s0 { letter-spacing: -.05px; }
.doc .s1 { letter-spacing: .35px; }
.doc .s2 { letter-spacing: .44px; }
.doc .s3 { letter-spacing: .54px; }
.doc .s4 { letter-spacing: .6px; }
.doc .s5 { letter-spacing: .69px; }
.doc li.s5 { letter-spacing: .74px; }
.doc .s6 { letter-spacing: .79px; }
.doc .s7 { letter-spacing: .85px; }
.doc .link { font-family: "Liberation Sans", sans-serif; color: #729fcf; text-decoration: underline; letter-spacing: .03px; }
.doc ul { margin: 0 0 14.600px; padding: 0 0 0 39px; list-style: none; }
.doc ul.stats { margin-bottom: 14px; }
.doc li::before { content: ""; display: inline-block; width: 6px; height: 6px; margin: 0 10px 2px -16px; border-radius: 50%; background: #000; vertical-align: middle; }
.dscroll { width: 14px; padding-left: 1px; display: flex; flex-direction: column; background: #373737; }
.dscroll .sbtn { height: 14px; }
.dscroll .end { margin-top: auto; }
.vthumb { height: 317px; background: #424242; border: 1px solid #595959; }
.buttons { display: flex; gap: 8px; padding: 7px 2px 0 1px; }
.buttons button { width: 78px; height: 22px; padding: 1px 0 0; border: 1px solid #565656; border-radius: 3px; background: linear-gradient(#454545, #3b3b3b); color: #e6e6e6; font: 500 12.800px Inter, sans-serif; position: relative; }
.buttons .menu { padding-right: 12px; }
.buttons .menu svg { position: absolute; right: 4px; top: 8px; width: 6px; height: 4px; }
.buttons .push { margin-left: auto; margin-right: -1px; }
.buttons .ok { width: 80px; border: 2px solid #4a86cf; background: #48505c; }

/* highlight rings */
.mark { position: absolute; height: 40px; border: 5px solid #ad1400; border-radius: 19px; }
.crs { left: 162px; top: 170px; width: 495px; }
.pixel { left: 146px; top: 797px; width: 218px; }
```
